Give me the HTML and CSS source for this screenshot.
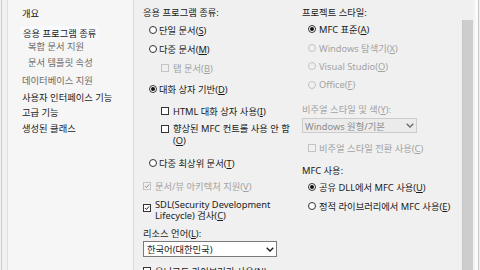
FILE: index.html
```html
<!DOCTYPE html>
<html lang="ko">
<head>
<meta charset="utf-8">
<link rel="stylesheet" href="styles.css">
</head>
<body>
<div class="dialog">
  <div class="edge"></div>
  <nav class="tree">
    <div class="node title">개요</div>
    <div class="node sel"><span class="sel-box">응용 프로그램 종류</span></div>
    <div class="node sub dim n-compound">복합 문서 지원</div>
    <div class="node sub dim n-template">문서 템플릿 속성</div>
    <div class="node dim n-db">데이터베이스 지원</div>
    <div class="node n-ui">사용자 인터페이스 기능</div>
    <div class="node n-adv">고급 기능</div>
    <div class="node n-gen">생성된 클래스</div>
  </nav>
  <main class="pane">
    <section class="col col-app">
      <div class="heading">응용 프로그램 종류:</div>
      <label class="opt ind r-app"><span class="radio"></span><span class="lbl">단일 문서(<u>S</u>)</span></label>
      <label class="opt ind r-app"><span class="radio"></span><span class="lbl">다중 문서(<u>M</u>)</span></label>
      <label class="opt ind2 off r-web"><span class="check"></span><span class="lbl">탭 문서(<u>B</u>)</span></label>
      <label class="opt ind r-dlg"><span class="radio on"></span><span class="lbl">대화 상자 기반(<u>D</u>)</span></label>
      <label class="opt ind2 r-html"><span class="check"></span><span class="lbl">HTML 대화 상자 사용(<u>I</u>)</span></label>
      <label class="opt ind2 multi enh"><span class="check"></span><span class="lbl">향상된 MFC 컨트롤 사용 안 함<br>(<u>O</u>)</span></label>
      <label class="opt ind r-top"><span class="radio"></span><span class="lbl">다중 최상위 문서(<u>T</u>)</span></label>
      <label class="opt off docview"><span class="check on"><svg viewBox="0 0 8 8"><path d="M1.3 4.1 L3.2 6 L6.8 1.9"/></svg></span><span class="lbl">문서/뷰 아키텍처 지원(<u>V</u>)</span></label>
      <label class="opt multi sdl"><span class="check on"><svg viewBox="0 0 8 8"><path d="M1.3 4.1 L3.2 6 L6.8 1.9"/></svg></span><span class="lbl">SDL(Security Development<br>Lifecycle) 검사(<u>C</u>)</span></label>
      <div class="caption lang-cap">리소스 언어(<u>L</u>):</div>
      <div class="select lang"><span>한국어(대한민국)</span><svg class="chev" viewBox="0 0 8 5"><path d="M0.7 0.8 L4 4 L7.3 0.8"/></svg></div>
      <label class="opt last"><span class="check"></span><span class="lbl">유니코드 라이브러리 사용(<u>N</u>)</span></label>
    </section>
    <section class="col col-style">
      <div class="heading">프로젝트 스타일:</div>
      <label class="opt ind r-st"><span class="radio on"></span><span class="lbl">MFC 표준(<u>A</u>)</span></label>
      <label class="opt ind off r-st"><span class="radio"></span><span class="lbl">Windows 탐색기(<u>X</u>)</span></label>
      <label class="opt ind off r-st"><span class="radio"></span><span class="lbl">Visual Studio(<u>O</u>)</span></label>
      <label class="opt ind off r-st"><span class="radio"></span><span class="lbl">Office(<u>F</u>)</span></label>
      <div class="caption off vis-cap">비주얼 스타일 및 색(<u>Y</u>):</div>
      <div class="select disabled vis"><span>Windows 원형/기본</span><svg class="chev" viewBox="0 0 8 5"><path d="M0.7 0.8 L4 4 L7.3 0.8"/></svg></div>
      <label class="opt ind off vis-switch"><span class="check"></span><span class="lbl">비주얼 스타일 전환 사용(<u>C</u>)</span></label>
      <div class="caption mfc-cap">MFC 사용:</div>
      <label class="opt ind r-st r-first"><span class="radio on"></span><span class="lbl">공유 DLL에서 MFC 사용(<u>U</u>)</span></label>
      <label class="opt ind r-st"><span class="radio"></span><span class="lbl">정적 라이브러리에서 MFC 사용(<u>E</u>)</span></label>
    </section>
  </main>
  <div class="scroll"><div class="thumb"></div></div>
  <div class="frame"><div class="f1"></div><div class="f2"></div><div class="f3"></div><div class="f4"></div></div>
</div>
</body>
</html>
```
FILE: styles.css
```css
html, body {
  margin: 0;
  padding: 0;
  width: 480px;
  height: 270px;
  overflow: hidden;
  background: #f0f0f0;
}
body {
  font-family: "Noto Sans", "Noto Sans CJK KR", sans-serif;
  font-size: 9.3px;
  color: #1a1a1a;
}
u { text-decoration: underline; text-underline-offset: 1px; text-decoration-thickness: 1px; }

.dialog {
  display: flex;
  height: 270px;
  padding-left: 1px;
}
.edge {
  width: 1px;
  background: #cdcdcd;
  margin-right: 5px;
  flex: none;
}

/* left tree */
.tree {
  box-sizing: border-box;
  width: 127px;
  flex: none;
  background: #f6f6f6;
  border-left: 1px solid #e0e0e0;
  border-right: 1px solid #dadada;
  padding-top: 4px;
  padding-left: 14px;
  display: flex;
  flex-direction: column;
}
.node {
  display: flex;
  align-items: center;
  white-space: nowrap;
  color: #1a1a1a;
}
.node.dim { color: #6b6b6b; }
.node.sub { padding-left: 6px; }
.node.title { height: 17px; margin-bottom: 5px; }
.node.sel { height: 13px; margin-left: -2px; }
.sel-box {
  display: flex;
  align-items: center;
  height: 13px;
  padding: 0 3px 0 3px;
  background: #f8fafd;
}
.n-compound { height: 14px; }
.n-template { height: 18px; }
.n-db { height: 18px; }
.n-ui { height: 15px; }
.n-adv { height: 16px; }
.n-gen { height: 15px; }

/* main pane */
.pane {
  flex: none;
  width: 319px;
  padding-left: 9px;
  display: grid;
  grid-template-columns: 159px 1fr;
}
.col {
  display: flex;
  flex-direction: column;
  padding-top: 4px;
  white-space: nowrap;
}
.heading { height: 16px; display: flex; align-items: center; }
.caption { display: flex; align-items: center; height: 14px; }
.off { color: #a3a3a3; }

.opt {
  display: flex;
  align-items: center;
  height: 19px;
}
.opt.ind { padding-left: 6px; }
.opt.ind2 { padding-left: 18px; }
.lbl { padding-left: 2px; }
.opt .check + .lbl { padding-left: 4px; }

.r-web { height: 20px; }
.r-dlg { height: 22px; }
.r-html { height: 21px; }
.r-top { height: 20px; }
.opt.multi {
  height: auto;
  align-items: flex-start;
}
.enh { padding-top: 2px; padding-bottom: 6px; line-height: 12px; }
.enh .check { margin-top: 2px; }
.docview { height: 20px; padding-top: 3px; }
.sdl { padding-top: 2.75px; padding-bottom: 4.25px; line-height: 11.5px; }
.sdl .check { margin-top: 5px; }
.lang-cap { height: 14px; }
.select {
  box-sizing: border-box;
  display: flex;
  align-items: center;
  justify-content: space-between;
  border: 1px solid #7a7a7a;
  background: #ffffff;
  padding: 0 2px 0 3px;
}
.select.lang { width: 134px; height: 16px; margin-top: 1px; }
.select.disabled {
  background: #ebebeb;
  border-color: #cccccc;
  color: #8c8c8c;
}
.select.vis { width: 115px; height: 15px; margin-top: 2px; padding-left: 2px; }
.chev { width: 8px; height: 5px; flex: none; }
.chev path { fill: none; stroke: #1a1a1a; stroke-width: 1.3; }
.select.disabled .chev path { stroke: #6a6a6a; }
.opt.last { height: 20px; margin-top: 4px; }

.col-style .opt.ind .lbl { padding-left: 3px; }
.r-st { height: 18.5px; }
.vis-cap { margin-top: 8px; }
.vis-switch { height: 20px; margin-top: 5px; padding-left: 7px; }
.mfc-cap { margin-top: 5px; }
.r-first { margin-top: 1px; }

/* controls */
.radio {
  box-sizing: border-box;
  width: 8px;
  height: 8px;
  flex: none;
  border: 1px solid #333333;
  border-radius: 50%;
  background: #ffffff;
  display: flex;
  align-items: center;
  justify-content: center;
}
.radio.on::after {
  content: "";
  width: 4px;
  height: 4px;
  border-radius: 50%;
  background: #111111;
}
.off .radio { border-color: #c2c2c2; background: #f0f0f0; }
.check {
  box-sizing: border-box;
  width: 8px;
  height: 8px;
  flex: none;
  border: 1px solid #333333;
  background: #ffffff;
  display: flex;
}
.check svg { width: 6px; height: 6px; }
.check svg path { fill: none; stroke: #1a1a1a; stroke-width: 1.3; }
.off .check { border-color: #c4c4c4; background: #f0f0f0; }
.off .check svg path { stroke: #8a8a8a; }

/* scrollbar & frame */
.scroll {
  width: 11px;
  flex: none;
  padding-top: 20px;
  box-sizing: border-box;
}
.thumb {
  height: 100%;
  background: #cdcdcd;
  border-left: 1px solid #c6c6c6;
  box-sizing: border-box;
}
.frame { display: flex; flex: none; }
.f1 { width: 2px; background: #f3f3f3; }
.f2 { width: 3px; background: #fafafa; }
.f3 { width: 1px; background: #c9c9c9; }
.f4 { width: 1px; background: #f0f0f0; }
```
